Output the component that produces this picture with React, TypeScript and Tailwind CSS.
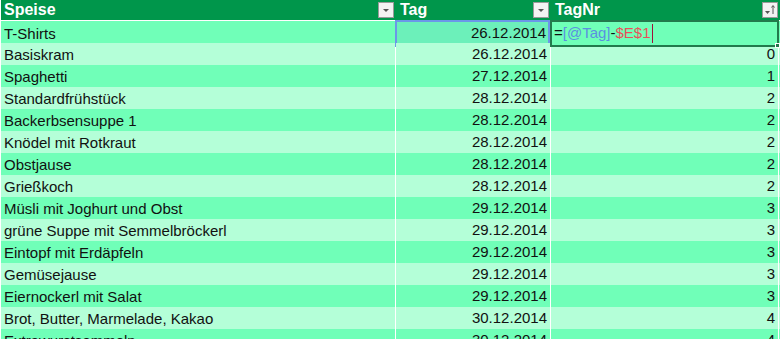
import React from "react";

type Row = { speise: string; tag: string; nr: string };

const rows: Row[] = [
  { speise: "T-Shirts", tag: "26.12.2014", nr: "" },
  { speise: "Basiskram", tag: "26.12.2014", nr: "0" },
  { speise: "Spaghetti", tag: "27.12.2014", nr: "1" },
  { speise: "Standardfrühstück", tag: "28.12.2014", nr: "2" },
  { speise: "Backerbsensuppe 1", tag: "28.12.2014", nr: "2" },
  { speise: "Knödel mit Rotkraut", tag: "28.12.2014", nr: "2" },
  { speise: "Obstjause", tag: "28.12.2014", nr: "2" },
  { speise: "Grießkoch", tag: "28.12.2014", nr: "2" },
  { speise: "Müsli mit Joghurt und Obst", tag: "29.12.2014", nr: "3" },
  { speise: "grüne Suppe mit Semmelbröckerl", tag: "29.12.2014", nr: "3" },
  { speise: "Eintopf mit Erdäpfeln", tag: "29.12.2014", nr: "3" },
  { speise: "Gemüsejause", tag: "29.12.2014", nr: "3" },
  { speise: "Eiernockerl mit Salat", tag: "29.12.2014", nr: "3" },
  { speise: "Brot, Butter, Marmelade, Kakao", tag: "30.12.2014", nr: "4" },
  { speise: "Extrawurstsemmeln", tag: "30.12.2014", nr: "4" },
];

function FilterButton({ sort }: { sort?: boolean }) {
  return (
    <div className="w-4 h-4 bg-[#f3f3f3] border border-[#9a9a9a] flex items-center justify-center">
      <svg width="14" height="14" viewBox="0 0 14 14">
        {sort ? (
          <>
            <path d="M2 8h5l-2.5 3z" fill="#555" />
            <path d="M10 3v8" stroke="#555" strokeWidth="1" />
            <path d="M8.5 4.5L10 2.5l1.5 2" fill="none" stroke="#555" strokeWidth="1" />
          </>
        ) : (
          <path d="M4 6h6l-3 3z" fill="#555" />
        )}
      </svg>
    </div>
  );
}

export default function App() {
  const cols = "grid grid-cols-[394px_154px_227px_1fr] gap-x-px";
  return (
    <div className="w-[780px] h-[339px] overflow-hidden bg-white font-['Liberation_Sans',Arial,sans-serif] text-[15px] text-[#111]">
      <div className="flex flex-col gap-y-px pl-px">
        <div className={`${cols} h-5 bg-[#00964b] text-white font-bold text-[16px] gap-x-0`}>
          <div className="flex items-center justify-between pl-[3px] pr-px">
            <span className="leading-5">Speise</span>
            <FilterButton />
          </div>
          <div className="flex items-center justify-between pl-1 pr-px">
            <span className="leading-5">Tag</span>
            <FilterButton />
          </div>
          <div className="flex items-center justify-between pl-1 pr-0">
            <span className="leading-5">TagNr</span>
            <FilterButton sort />
          </div>
          <div />
        </div>
        {rows.map((r, i) => {
          const bg = i % 2 === 0 ? "bg-[#70ffb8]" : "bg-[#b4ffd8]";
          const active = i === 0;
          return (
            <div key={i} className={`${cols} h-[21px]`}>
              <div className={`${bg} pl-[3px] flex items-center leading-[21px]`}>{r.speise}</div>
              {active ? (
                <div className="bg-[#6cf0ba] border-2 border-[#6b97e8] -my-px -ml-px flex items-center justify-end pr-[2px]">
                  {r.tag}
                </div>
              ) : (
                <div className={`${bg} flex items-center justify-end pr-[3px]`}>{r.tag}</div>
              )}
              {active ? (
                <div className="relative bg-[#70ffb8] border-2 border-[#227a4c] -my-px -mx-px flex items-center pl-[2px]">
                  <span>=</span>
                  <span className="text-[#5b8fe0]">[@Tag]</span>
                  <span>-</span>
                  <span className="text-[#e8505a]">$E$1</span>
                  <span className="ml-px w-px h-[19px] bg-[#a0103a]" />
                  <span className="absolute -right-[3px] -bottom-[3px] w-[5px] h-[5px] bg-[#227a4c] border border-white" />
                </div>
              ) : (
                <div className={`${bg} flex items-center justify-end pr-[3px]`}>{r.nr}</div>
              )}
              <div className={bg} />
            </div>
          );
        })}
      </div>
    </div>
  );
}
